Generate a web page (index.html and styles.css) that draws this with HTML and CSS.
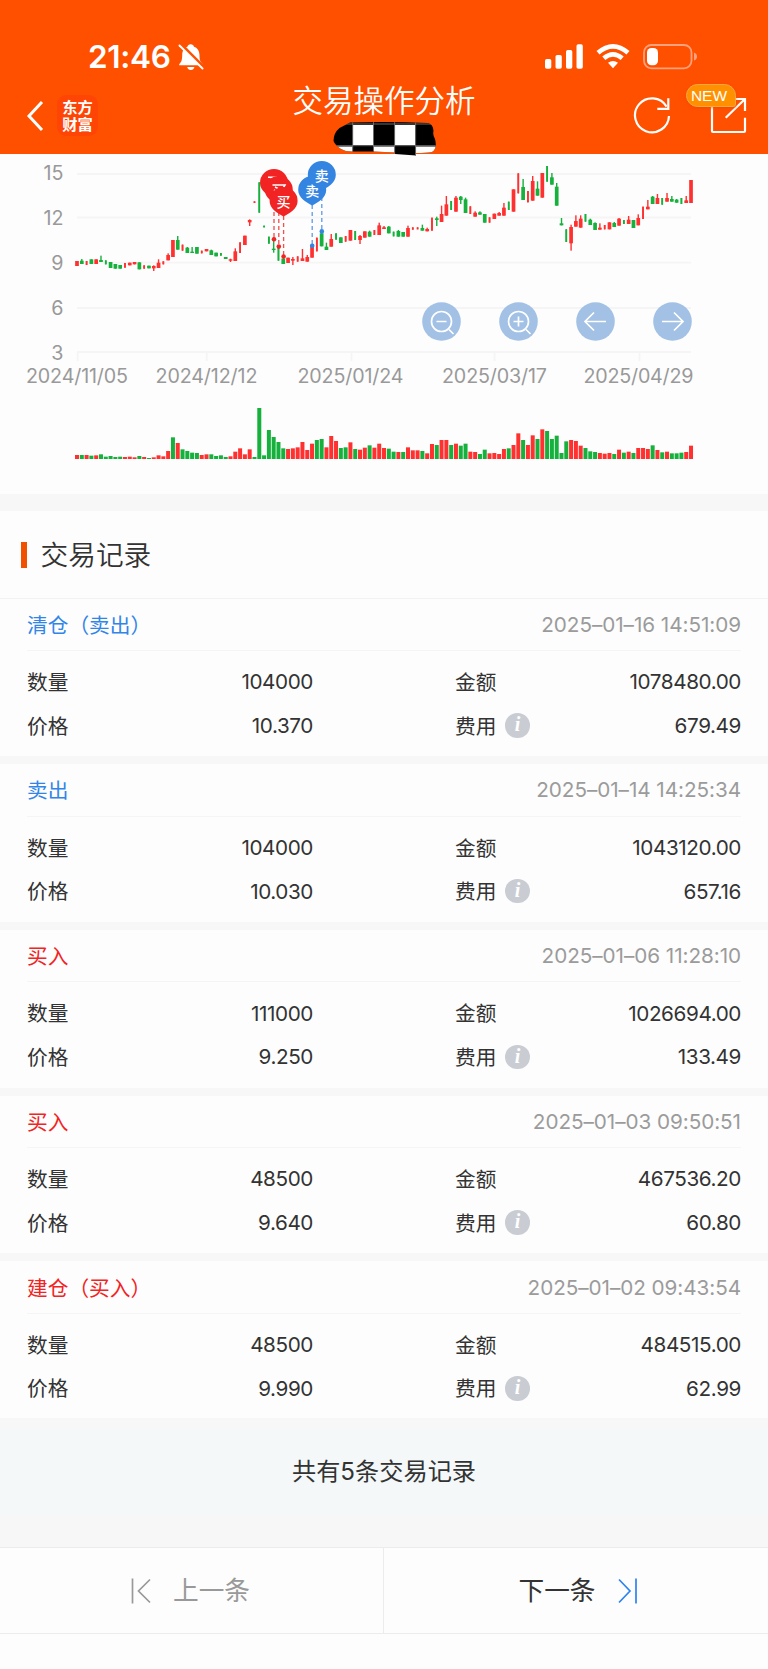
FILE: index.html
```html
<!DOCTYPE html>
<html lang="zh-CN">
<head>
<meta charset="utf-8">
<title>交易操作分析</title>
<link rel="stylesheet" href="styles.css">
</head>
<body>
<header class="header">
  <div class="status">
    <span class="time">21:46</span>
    <svg class="bell" width="26" height="28" viewBox="0 0 26 28"><path d="M12.7 1.2c1.8 0 3 1 3.3 2.5 3.8 1.4 5.500 4.400 5.500 8.500 0 5 .6 6.200 3.300 9v1.100H1.200v-1.100C3.800 18.400 4 17.200 4.200 12.200 4.300 8 5.800 5 9.400 3.700c.4-1.500 1.500-2.500 3.300-2.500z" fill="#fff"/><path d="M9.200 24h7.200c-.4 1.900-1.800 3-3.600 3s-3.200-1.100-3.600-3z" fill="#fff"/><path d="M2.700 1.300 26 24.600" stroke="#ff5000" stroke-width="3.400"/><path d="M1.500 2.500 24.500 25.500" stroke="#fff" stroke-width="2" stroke-linecap="round"/></svg>
    <svg class="signals" width="156" height="28" viewBox="544 43 156 28">
      <g fill="#fff"><rect x="545" y="59" width="6.300" height="9.700" rx="1.700"/><rect x="555.500" y="55" width="6.300" height="13.700" rx="1.700"/><rect x="566" y="50" width="6.300" height="18.700" rx="1.700"/><rect x="576.500" y="44.300" width="6.300" height="24.400" rx="1.700"/></g>
      <g fill="none" stroke="#fff" stroke-width="4.600"><path d="M598 52.700q15-12.800 30 0"/><path d="M603.800 58.300q9.200-7.800 18.400 0"/></g><path d="M608 62.800q5-3.600 10 0l-5 5.400z" fill="#fff"/>
      <rect x="644" y="45" width="47.500" height="23.300" rx="7.500" fill="none" stroke="#ffa17c" stroke-width="1.800"/><rect x="647" y="48" width="11" height="17.300" rx="4.500" fill="#fff"/><path d="M694 52.500q3 1 3 4t-3 4z" fill="#ffa17c"/>
    </svg>
  </div>
  <nav class="nav">
    <div class="nav-left">
      <svg width="18" height="32" viewBox="0 0 18 32"><path d="M16 2 3 16l13 14" fill="none" stroke="#fff" stroke-width="3"/></svg>
      <div class="brand"><span>东方</span><span>财富</span></div>
    </div>
    <div class="nav-title">
      <h1>交易操作分析</h1>
      <svg class="scribble" width="106" height="34" viewBox="332 122 106 34">
        <clipPath id="blob"><path d="M350 122.500Q390 121.500 428 123q5 1 5.500 8-1 4 1.500 8 2.500 10-3 13-6 1-16 1v2.500l-21-1.500v-1.500l-21-1h-20Q346 152 341 149q-6-4-7.500-8 0-8 6-13z"/></clipPath>
        <g clip-path="url(#blob)"><path fill="#000" d="M332 121h106v35H332z"/><path fill="#fff" d="M353 125h20v20h-20zM395 125h20v20h-20zM332 146.500h20.500V156H332zM374 146.500h20.500V156H374zM416 146.500h22V156h-22z"/><path d="M332 124h106M332 145.700h106M352.700 122v34M373.500 122v34M394.600 122v34M415.600 122v34" stroke="#777" stroke-width=".9"/></g>
      </svg>
    </div>
    <div class="nav-right">
      <svg width="38" height="38" viewBox="632 96 38 38"><g fill="none" stroke="#fff" stroke-width="2.200"><path d="M668 116a17 17 0 1 1-2.400-9.400"/><path d="M667.300 98.300v10.500h-11"/></g></svg>
      <div class="share">
        <svg width="38" height="38" viewBox="708 96 38 38"><path d="M711 102v29q0 1 1 1h31q1 0 1-1v-13.300M724.700 117.700 744 99M733 99h11v12" fill="none" stroke="#fff" stroke-width="2.200"/></svg>
        <span class="new">NEW</span>
      </div>
    </div>
  </nav>
</header>

<section class="chart">
  <svg id="plot" class="plot" width="768" height="340" viewBox="0 154 768 340">
    <g class="grid"><path d="M77 174h614M77 217.500h614M77 262.700h614M77 308h614M77 352h614M77.700 352v9M206.800 352v9M351.500 352v9M494.600 352v9M639.500 352v9"/></g>
    <g class="axis y">
      <text x="63.500" y="180.300">15</text><text x="63.500" y="224.500">12</text><text x="63.500" y="269.500">9</text><text x="63.500" y="314.600">6</text><text x="63.500" y="359.500">3</text>
    </g>
    <g class="axis">
      <text x="26" y="383.300" textLength="102">2024/11/05</text>
      <text x="155.500" y="383.300" textLength="102">2024/12/12</text>
      <text x="297.500" y="383.300" textLength="106">2025/01/24</text>
      <text x="442" y="383.300" textLength="105">2025/03/17</text>
      <text x="583.500" y="383.300" textLength="110">2025/04/29</text>
    </g>
    <g id="bars"></g>
    <g id="pins"></g>
  </svg>
  <div class="tools">
    <svg viewBox="0 0 39 39"><circle cx="19.500" cy="19.500" r="19.300"/><path d="M27 27.500l4.500 4.500M14.500 19.500h10"/><circle class="ring" cx="19.500" cy="19.500" r="10"/></svg>
    <svg viewBox="0 0 39 39"><circle cx="19.500" cy="19.500" r="19.300"/><path d="M27 27.500l4.500 4.500M14.500 19.500h10M19.500 14.500v10"/><circle class="ring" cx="19.500" cy="19.500" r="10"/></svg>
    <svg viewBox="0 0 39 39"><circle cx="19.500" cy="19.500" r="19.300"/><path d="M30 19.500H9.500M18 10.500l-9 9 9 9"/></svg>
    <svg viewBox="0 0 39 39"><circle cx="19.500" cy="19.500" r="19.300"/><path d="M9 19.500h20.500M21 10.500l9 9-9 9"/></svg>
  </div>
</section>

<main>
  <h2 class="section-title">交易记录</h2>
  <div id="records" class="records"></div>
  <p class="total">共有5条交易记录</p>
</main>
<footer class="pager">
  <a class="prev"><svg width="21" height="26" viewBox="0 0 21 26"><path d="M1.500.500v25M19 1.500 7.500 13 19 24.500"/></svg><span>上一条</span></a>
  <a class="next"><span>下一条</span><svg width="21" height="26" viewBox="0 0 21 26"><path d="M19 .500v25M2 1.500 13 13 2 24.500"/></svg></a>
</footer>
<script src="app.js"></script>
</body>
</html>
```
FILE: styles.css
```css
* { box-sizing: border-box; }
body { margin: 0; width: 768px; height: 1669px; overflow: hidden; background: #fdfdfd; color: #333; font-family: Inter, "Noto Sans CJK SC", sans-serif; font-weight: 400; }
svg { display: block; flex: none; }
h1, h2, p { margin: 0; font-weight: 400; }

.header { height: 153.500px; background: #ff5000; color: #fff; }
.status { height: 82px; padding: 43px 68px 0 88px; display: flex; align-items: flex-start; }
.time { width: 89px; font-size: 31.500px; line-height: 28px; font-weight: 600; letter-spacing: -.3px; }
.bell { margin-left: .5px; }
.signals { margin-left: auto; }
.nav { height: 71.500px; display: grid; grid-template-columns: 1fr 190px 1fr; }
.nav-left { display: flex; align-items: flex-start; padding: 13px 0 0 26px; gap: 13px; }
.nav-left svg { margin-top: 5px; }
.brand { width: 41px; height: 41px; border-radius: 9px; background: #ff4505; font: 700 15.300px/17px "Noto Sans CJK SC", sans-serif; text-align: center; padding-top: 3px; }
.brand span { display: block; height: 17px; }
.nav-title { display: flex; flex-direction: column; align-items: center; }
.nav-title h1 { font-size: 30.500px; line-height: 38px; font-weight: 350; white-space: nowrap; }
.scribble { margin-top: 2px; margin-left: 2px; position: relative; z-index: 2; }
.nav-right { display: flex; justify-content: flex-end; gap: 38px; padding: 14px 21.500px 0 0; }
.share { position: relative; }
.new { position: absolute; left: -23px; top: -12px; width: 50px; height: 23px; border: 1px solid #ffa73d; border-radius: 12px 12px 3px 12px; background: #ff9100; font: 400 15.500px/22px "Liberation Sans", Arial, sans-serif; text-align: center; padding-right: 3px; box-shadow: 0 1px 3px #e9480088; }

.chart { height: 340px; position: relative; }
.grid { stroke: #f5f5f5; stroke-width: 1.800; fill: none; }
.axis { font-size: 19.700px; fill: #999; font-weight: 400; }
.y { text-anchor: end; }
.pin-text { font: 500 14px "Noto Sans CJK SC", sans-serif; fill: #fff; text-anchor: middle; }
.tools { position: absolute; left: 422.300px; top: 148px; display: flex; gap: 37.900px; }
.tools svg { width: 39px; height: 39px; fill: #a2c1e5; }
.tools path, .tools .ring { fill: none; stroke: #fff; stroke-width: 1.700; }

.section-title { height: 105px; border-top: 17.500px solid #f7f7f7; border-bottom: 1px solid #f2f2f2; padding: 0 0 2px 21px; display: flex; align-items: center; gap: 14px; font-size: 27.700px; font-weight: 350; }
.section-title::before { content: ""; width: 5.500px; height: 26px; margin-top: 3px; background: #f05000; }
.record { height: 165.700px; padding: 0 27px; border-bottom: 8.500px solid #f7f7f7; font-size: 20.700px; }
.record-head { height: 52.500px; border-bottom: 1.500px solid #f5f5f5; display: flex; justify-content: space-between; align-items: center; }
.record-head span { padding-bottom: 1px; }
.sell { color: #3285e8; }
.buy { color: #f22323; }
.date { color: #9b9b9b; letter-spacing: -.05px; white-space: nowrap; }
.num { letter-spacing: -.4px; white-space: nowrap; }
.fields { padding-top: 9px; display: grid; grid-template-columns: 286px 286px; column-gap: 142px; grid-auto-rows: 43.700px; }
.field { display: flex; justify-content: space-between; align-items: center; }
.label { display: flex; align-items: center; gap: 9px; padding-bottom: 2px; }
.info { width: 24.500px; height: 24.500px; margin-top: 2px; border-radius: 50%; background: #c9cdd3; color: #fff; font: italic 700 20px/23px "Liberation Serif", serif; text-align: center; }
.total { height: 129px; margin-top: -8.500px; background: #f4f8f9; border: solid #f7f7f7; border-width: 10px 0 31px; font-size: 24.200px; text-align: center; line-height: 88px; }
.pager { height: 87px; border: solid #ececec; border-width: 1px 0; display: grid; grid-template-columns: 1fr 1fr; font-size: 25.700px; }
.pager a { display: flex; align-items: center; gap: 21px; }
.pager span { padding-bottom: 4px; }
.pager path { fill: none; stroke: currentColor; stroke-width: 1.700; }
.prev { padding-left: 131px; color: #999; border-right: 1.500px solid #ececec; }
.next { padding-left: 134.500px; }
.next svg { color: #2d83f0; }
```
FILE: app.js
```js
const RED = '#ff3030', GREEN = '#16b03c';
const X0 = 77, STEP = 4.797;

// Each candle: colour, high, body top, body bottom, low (thirds of a unit), n = thin body
const candles = `r333,348 g327,332,342 r333,345n g328,342 r328,342 g317,330,336 g331,343n g336,354 g342,356 g345,356
r339,353n r338,346 r336,343 g337,358 r346,356n g347,355 r346,348,355,363 r328,338,354 r334,343n r310,315,331
r270,321 g258,270,299 r284,302n g291,293,309 g291,305,309 g291,311 r302,310n r297,304 g299,301,315 g308,319
g309,317n g321,327 r326,328,332,336 r295,304,333 r277,309n r257,285 r208,210,217,228 r154,159n g97,188n g227,232n
g260,281n g262,296,300,308 g290,332n g326,342 r323,339 r321,327,332,345 r319,335n r297,325,333 r315,321,335 r286,323
r263,304n g245,250,289 g278,290,300 r252,267,290 g250,269n g262,279 r258,275n r240,272 g243,270n r255,258,270,282
r244,263 g242,245,260 r240,255n r218,226,255 r228,232,237 g228,230,250 g245,259n g240,243,260 g246,260 r227,234,260
r232,239n r232,238n g224,234,242 r233,237,244 r203,242n g200,205,210,228 r167,192,216 r138,163,197 g153,180n r138,143,185
g138,140,150,162 g143,148,189 r169,192n r184,188,200 g184,187,194 g192,218 r202,218n r191,207 r186,189,197 r159,173,197
g155,180n r118,185 r70,130n g87,111,150 r123,157n r78,93,152 g94,116,137 r69,143 g48,95n g69,82,104
g99,110,167 g204,220,226 g238,276n r224,231,280,302 r196,213,230 r196,206,233 g192,215n g206,209,225 g217,219,240 r220,233,239
r225,238n r217,238 g216,219,231 r204,206,227 g210,222n r198,209,222 g210,234 r193,204,226 r170,207n r150,170,178
g138,140,162 r132,144,162 g144,164n r129,144,155 g138,147,155 g147,149,158 g144,162n r138,151,159 r90,155,159`.split(/\s+/);

const volume = `r12 g12 r12 g10 r11 g14 g7 g9 g6 g7 r6 r7 r5 g9 r6 g3 r5 r11 r8 r24 g65 r48 g29 g24 g19 g18 r12 r14 g14 g9 g11 g6
r8 r22 r32 r14 r29 g6 g153 g11 g87 g66 g51 g32 r30 r32 r35 r51 r27 r46 g57 g60 r35 r69 r54 g33 g35 r50 g30 r28 r34 g41 r34 r46
r33 g31 g22 r21 g21 r35 r26 r26 g24 r17 r45 g42 r57 r57 g42 r46 g40 g46 r22 r21 g15 g28 r17 r18 r15 r30 g32 r42 r77 g57 r42
r71 g60 r89 g84 g60 g70 g18 g53 r57 r54 r40 g33 g23 g21 r18 r16 r18 g15 r28 g19 r22 g18 r33 r33 r30 g41 r27 g20 r22 g17 g17 g19 r21 r40`.split(/\s+/);

const rect = (x, y, w, h, c) => `<rect x="${x.toFixed(2)}" y="${y.toFixed(2)}" width="${w}" height="${h.toFixed(2)}" fill="${c}"/>`;
let bars = '';
candles.forEach((s, i) => {
  const c = s[0] === 'r' ? RED : GREEN;
  const v = s.slice(1).replace('n', '').split(',').map(n => 150 + n / 3);
  const x = X0 + STEP * i;
  const high = v[0], low = v[v.length - 1];
  const top = v.length > 2 ? v[1] : high;
  const bottom = v.length > 3 ? v[2] : low;
  const w = s.endsWith('n') ? 1.8 : 3.7;
  bars += rect(x - .7, high, 1.4, low - high, c);
  if (i === candles.length - 1) bars += rect(x - 1.85, high, 3.7, low - high, c);
  else bars += rect(x - w / 2, top, w, bottom - top, c);
});
volume.forEach((s, i) => {
  const h = s.slice(1) / 3;
  bars += rect(X0 + STEP * i - 2, 459 - h, 4, h, s[0] === 'r' ? RED : GREEN);
});
document.getElementById('bars').innerHTML = bars;

const pins = [
  [274, 183, 239.2, '#f22323', ''], [278.8, 190, 246.6, '#f22323', ''], [283.6, 201, 256.6, '#f22323', '买'],
  [312.2, 190, 245.8, '#3484e2', '卖'], [321.8, 175, 231.4, '#3484e2', '卖']
];
// visible strokes of the labels on the two covered buy pins
const covered = { 0: 'M268 177.300h9M270.500 179l3 1.500', 1: 'M272.500 185h12.500l-1.500 2.500M275 187l3 1.500M274 190l3 1.500' };
document.getElementById('pins').innerHTML =
  pins.map(([x, y, d, c]) => `<path d="M${x} ${y + 15}V${d}" stroke="${c}" stroke-width="1.3" stroke-dasharray="4 3" opacity=".8"/><circle cx="${x}" cy="${d}" r="2.300" fill="${c}"/>`).join('') +
  pins.map(([x, y, , c, t], i) => `<path d="M${x} ${y + 15.5}C${x - 6} ${y + 12} ${x - 14} ${y + 8} ${x - 14} ${y}a14 14 0 0 1 28 0C${x + 14} ${y + 8} ${x + 6} ${y + 12} ${x} ${y + 15.5}z" fill="${c}"/>` +
    (t ? `<text class="pin-text" x="${x}" y="${y + 5.5}">${t}</text>` : `<path d="${covered[i]}" fill="none" stroke="#fff" stroke-width="1.500"/>`)).join('');

const records = [
  ['sell', '清仓（卖出）', '2025–01–16 14:51:09', '104000', '1078480.00', '10.370', '679.49'],
  ['sell', '卖出', '2025–01–14 14:25:34', '104000', '1043120.00', '10.030', '657.16'],
  ['buy', '买入', '2025–01–06 11:28:10', '111000', '1026694.00', '9.250', '133.49'],
  ['buy', '买入', '2025–01–03 09:50:51', '48500', '467536.20', '9.640', '60.80'],
  ['buy', '建仓（买入）', '2025–01–02 09:43:54', '48500', '484515.00', '9.990', '62.99']
];
const field = (label, value) => `<div class="field"><span class="label">${label}</span><span class="num">${value}</span></div>`;
document.getElementById('records').innerHTML = records.map(([kind, name, date, qty, sum, price, fee]) => `
  <article class="record">
    <div class="record-head"><span class="${kind}">${name}</span><time class="date">${date}</time></div>
    <div class="fields">${field('数量', qty)}${field('金额', sum)}${field('价格', price)}${field('费用<i class="info">i</i>', fee)}</div>
  </article>`).join('');
```
